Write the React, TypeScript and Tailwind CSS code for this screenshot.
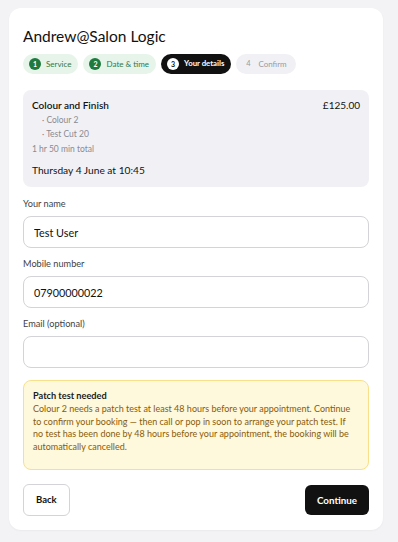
import React from 'react';

const steps = [
  { n: 1, label: 'Service', state: 'done' },
  { n: 2, label: 'Date & time', state: 'done' },
  { n: 3, label: 'Your details', state: 'active' },
  { n: 4, label: 'Confirm', state: 'todo' },
];

const Field: React.FC<{ label: string; value: string }> = ({ label, value }) => (
  <div className="flex flex-col">
    <label className="text-[9.2px] text-[#3f3f46] mb-[5px] leading-[14px]">{label}</label>
    <input
      defaultValue={value}
      className="h-[32px] w-full rounded-[8px] border border-[#d4d4d8] bg-white px-[10px] text-[10.8px] text-[#111] outline-none"
    />
  </div>
);

const App: React.FC = () => {
  return (
    <div className="min-h-[542px] bg-[#f3f3f6] pt-[8px] px-[9px] pb-[14px]" style={{ fontFamily: 'Lato, "Noto Sans", sans-serif' }}>
      <div className="w-[374px] rounded-[12px] bg-white px-[14px] pt-[17px] pb-[14px] shadow-[0_1px_2px_rgba(0,0,0,0.04)]">
        <h1 className="text-[15.5px] leading-[22px] text-[#111]">Andrew@Salon Logic</h1>

        {/* Steps */}
        <div className="mt-[7px] flex gap-[5px]">
          {steps.map((s) => (
            <div
              key={s.n}
              className={
                s.state === 'done'
                  ? 'flex h-[20px] items-center gap-[5px] rounded-full bg-[#e6f4ea] pl-[6px] pr-[7px] text-[8px] text-[#2d7a4a]'
                  : s.state === 'active'
                  ? 'flex h-[20px] items-center gap-[5px] rounded-full bg-[#111] pl-[6px] pr-[7px] text-[7.8px] font-bold text-white'
                  : 'flex h-[20px] items-center gap-[4px] rounded-full bg-[#f1f1f5] pl-[6px] pr-[9px] text-[8px] text-[#9a9aa2]'
              }
            >
              <span
                className={
                  s.state === 'done'
                    ? 'flex h-[12px] w-[12px] items-center justify-center rounded-full bg-[#1e7a3e] text-[7px] font-bold text-white'
                    : s.state === 'active'
                    ? 'flex h-[12px] w-[12px] items-center justify-center rounded-full bg-white text-[7px] font-bold text-[#111]'
                    : 'flex h-[12px] w-[12px] items-center justify-center rounded-full text-[7.5px] text-[#9a9aa2]'
                }
              >
                {s.n}
              </span>
              {s.label}
            </div>
          ))}
        </div>

        {/* Summary */}
        <div className="mt-[16px] rounded-[8px] bg-[#f1f1f5] px-[9px] pt-[8px] pb-[9px]">
          <div className="flex justify-between text-[10px] leading-[15px] font-semibold text-[#111]">
            <span>Colour and Finish</span>
            <span className="font-normal">£125.00</span>
          </div>
          <div className="pl-[10px] text-[8.5px] leading-[14px] text-[#8a8a92]">
            <div>· Colour 2</div>
            <div>· Test Cut 20</div>
          </div>
          <div className="mt-[1px] text-[8.5px] leading-[14px] text-[#8a8a92]">1 hr 50 min total</div>
          <div className="mt-[7px] text-[10.2px] leading-[15px] text-[#111]">Thursday 4 June at 10:45</div>
        </div>

        {/* Form */}
        <div className="mt-[10px] flex flex-col gap-[9px]">
          <Field label="Your name" value="Test User" />
          <Field label="Mobile number" value="07900000022" />
          <Field label="Email (optional)" value="" />
        </div>

        {/* Patch test */}
        <div className="mt-[12px] rounded-[8px] border border-[#f8e08a] bg-[#fef8dc] pl-[9px] pr-[14px] pt-[8px] pb-[16px]">
          <div className="text-[9.2px] leading-[14px] font-bold text-[#1c1c1c]">Patch test needed</div>
          <p className="text-[9px] leading-[12.5px] text-[#8a5a08]">
            Colour 2 needs a patch test at least 48 hours before your appointment. Continue to confirm your booking — then call or pop in soon to arrange your patch test. If no test has been done by 48 hours before your appointment, the booking will be automatically cancelled.
          </p>
        </div>

        {/* Actions */}
        <div className="mt-[14px] flex items-center justify-between">
          <button className="h-[32px] rounded-[6px] border border-[#d4d4d8] bg-white px-[12px] text-[9.5px] font-bold text-[#111]">
            Back
          </button>
          <button className="h-[30px] rounded-[6px] bg-[#111] px-[12px] text-[9.8px] font-bold text-white">
            Continue
          </button>
        </div>
      </div>
    </div>
  );
};

export default App;
